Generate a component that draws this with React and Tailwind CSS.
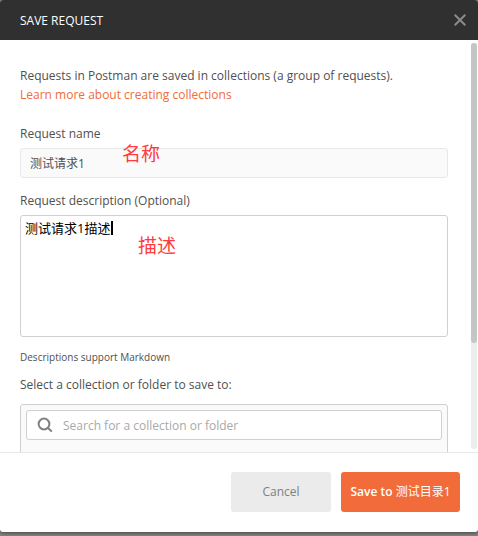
import { useState } from "react";

const fieldLabel = "block text-xs leading-5 text-[#505050]";

function CloseIcon() {
  return (
    <svg className="size-3" viewBox="0 0 12 12" fill="none" aria-hidden="true">
      <path d="M0.7 0.7 11.3 11.3M11.3 0.7 0.7 11.3" stroke="#8b8b8b" strokeWidth="2" />
    </svg>
  );
}

function SearchIcon() {
  return (
    <svg className="size-4 shrink-0" viewBox="0 0 16 16" fill="none" aria-hidden="true">
      <circle cx="7" cy="7" r="5.4" stroke="#808080" strokeWidth="2" />
      <path d="M10.8 10.8 14.8 14.6" stroke="#808080" strokeWidth="2" />
    </svg>
  );
}

function Scrollbar() {
  return (
    <div className="my-[3px] mr-px flex w-1.5 shrink-0 flex-col rounded-full bg-[#ededed]" aria-hidden="true">
      <div className="h-[74%] rounded-full bg-[#c5c5c5]" />
    </div>
  );
}

export default function App() {
  const [name, setName] = useState("测试请求1");
  const [description, setDescription] = useState("测试请求1描述");
  const [search, setSearch] = useState("");

  return (
    <div className="h-dvh bg-[#858384] pb-1 font-['Open_Sans','Noto_Sans_CJK_SC',sans-serif] text-xs">
      <div className="flex h-full flex-col overflow-hidden rounded-[3px] bg-white shadow-[0_1px_4px_rgba(0,0,0,0.5)]">
        <header className="flex h-10 shrink-0 items-center justify-between bg-[#303030] pr-3 pl-5">
          <h1 className="text-xs leading-[19px] text-white">SAVE REQUEST</h1>
          <button type="button" aria-label="Close">
            <CloseIcon />
          </button>
        </header>

        <div className="flex min-h-0 flex-1">
          <main className="min-w-0 flex-1 overflow-hidden pt-[26px] pr-[23px] pl-5">
            <p className="leading-[19px] text-[#505050]">
              Requests in Postman are saved in collections (a group of requests).
              <br />
              <a href="#learn" className="text-[#f26b3a]">
                Learn more about creating collections
              </a>
            </p>

            <div className="relative mt-5">
              <label htmlFor="name" className={fieldLabel}>
                Request name
              </label>
              <input
                id="name"
                type="text"
                className="mt-1 block h-[30px] w-full rounded-[3px] border border-[#e8e8e8] bg-[#fafafa] px-[9px] text-xs text-[#505050] outline-none"
                value={name}
                onChange={(e) => setName(e.target.value)}
              />
              <span className="absolute top-[18px] left-[102px] text-[19px] leading-6 text-[#ff3b3b]">名称</span>
            </div>

            <div className="relative mt-[13px]">
              <label htmlFor="description" className={fieldLabel}>
                Request description (Optional)
              </label>
              <textarea
                id="description"
                className="mt-1 block h-[122px] w-full resize-none rounded-[3px] border border-[#d0d0d0] bg-white px-1 py-0.5 text-[13px] leading-5 text-black outline-none"
                value={description}
                onChange={(e) => setDescription(e.target.value)}
              />
              <span className="absolute top-[30px] left-[91px] h-3.5 w-0.5 bg-black" aria-hidden="true" />
              <span className="absolute top-[43px] left-[118px] text-[19px] leading-6 text-[#ff3b3b]">描述</span>
            </div>

            <p className="mt-3 text-[10px] leading-4 text-[#505050]">Descriptions support Markdown</p>

            <label htmlFor="search" className="mt-2 block leading-6 text-[#505050]">
              Select a collection or folder to save to:
            </label>
            <div className="mt-[7px] h-40 rounded-[3px] border border-[#d0d0d0] bg-[#fafafa] p-[5px]">
              <div className="flex h-[30px] items-center gap-2.5 rounded-[3px] border border-[#d0d0d0] bg-white px-2.5">
                <SearchIcon />
                <input
                  id="search"
                  type="text"
                  className="h-5 min-w-0 flex-1 text-xs text-[#505050] outline-none placeholder:text-[#a9a9a9]"
                  placeholder="Search for a collection or folder"
                  value={search}
                  onChange={(e) => setSearch(e.target.value)}
                />
              </div>
            </div>
          </main>
          <Scrollbar />
        </div>

        <footer className="flex shrink-0 justify-end gap-2.5 border-t border-[#e8e8e8] pt-[19px] pr-[18px] pb-5">
          <button type="button" className="h-10 w-[100px] rounded-[3px] bg-[#ebebeb] text-[#808080]">
            Cancel
          </button>
          <button
            type="button"
            className="h-10 w-[119px] rounded-[3px] bg-[#f26b3a] font-semibold whitespace-nowrap text-white"
          >
            Save to <span className="font-normal">测试目录1</span>
          </button>
        </footer>
      </div>
    </div>
  );
}
